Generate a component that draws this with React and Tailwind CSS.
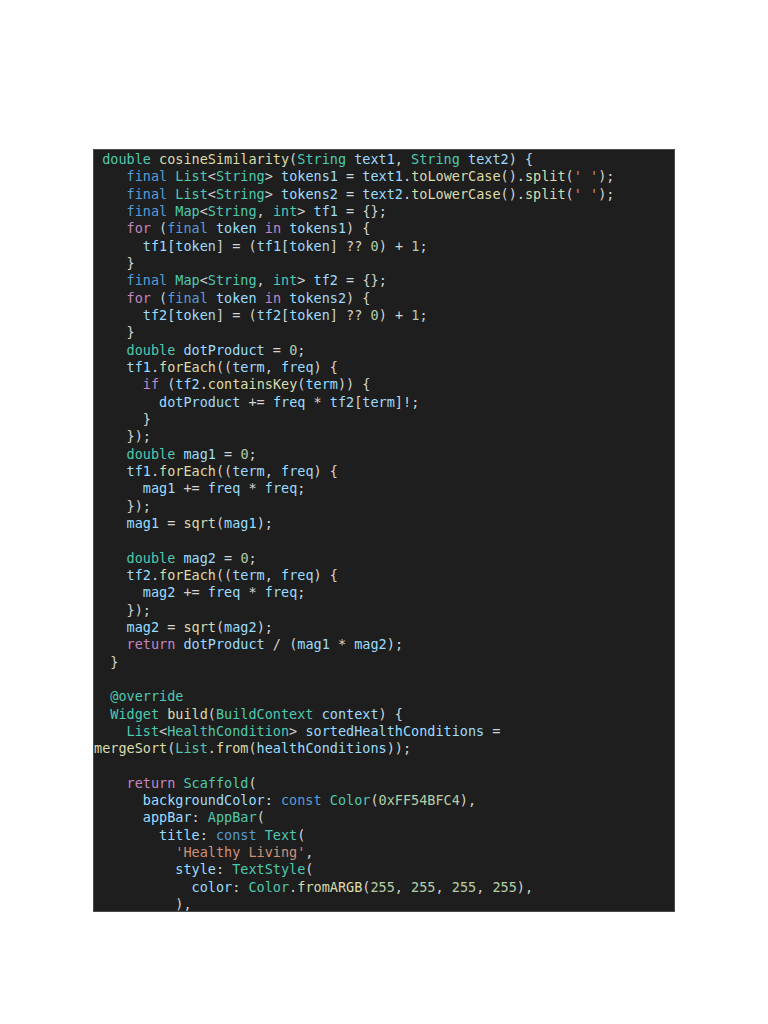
import React from 'react';

const CODE = [
  " double cosineSimilarity(String text1, String text2) {",
  "    final List<String> tokens1 = text1.toLowerCase().split(' ');",
  "    final List<String> tokens2 = text2.toLowerCase().split(' ');",
  "    final Map<String, int> tf1 = {};",
  "    for (final token in tokens1) {",
  "      tf1[token] = (tf1[token] ?? 0) + 1;",
  "    }",
  "    final Map<String, int> tf2 = {};",
  "    for (final token in tokens2) {",
  "      tf2[token] = (tf2[token] ?? 0) + 1;",
  "    }",
  "    double dotProduct = 0;",
  "    tf1.forEach((term, freq) {",
  "      if (tf2.containsKey(term)) {",
  "        dotProduct += freq * tf2[term]!;",
  "      }",
  "    });",
  "    double mag1 = 0;",
  "    tf1.forEach((term, freq) {",
  "      mag1 += freq * freq;",
  "    });",
  "    mag1 = sqrt(mag1);",
  "",
  "    double mag2 = 0;",
  "    tf2.forEach((term, freq) {",
  "      mag2 += freq * freq;",
  "    });",
  "    mag2 = sqrt(mag2);",
  "    return dotProduct / (mag1 * mag2);",
  "  }",
  "",
  "  @override",
  "  Widget build(BuildContext context) {",
  "    List<HealthCondition> sortedHealthConditions =",
  "mergeSort(List.from(healthConditions));",
  "",
  "    return Scaffold(",
  "      backgroundColor: const Color(0xFF54BFC4),",
  "      appBar: AppBar(",
  "        title: const Text(",
  "          'Healthy Living',",
  "          style: TextStyle(",
  "            color: Color.fromARGB(255, 255, 255, 255),",
  "          ),",
];

const colors = {
  keyword: 'text-[#569cd6]',
  control: 'text-[#c586c0]',
  type: 'text-[#4ec9b0]',
  fn: 'text-[#dcdcaa]',
  variable: 'text-[#9cdcfe]',
  string: 'text-[#ce9178]',
  number: 'text-[#b5cea8]',
  plain: 'text-[#d4d4d4]',
};

const keywords = new Set(['final', 'const']);
const control = new Set(['for', 'in', 'if', 'return']);
const types = new Set([
  'double', 'List', 'String', 'Map', 'int', 'Widget', 'BuildContext',
  'HealthCondition', 'Scaffold', 'Color', 'AppBar', 'Text', 'TextStyle', '@override',
]);

// rough dart highlighter, good enough for this snippet
function tokenize(line) {
  const re = /('[^']*')|(@?[A-Za-z_][A-Za-z0-9_]*)|(0x[0-9A-Fa-f]+|\d+)|(\s+)|(.)/g;
  const out = [];
  let m;
  while ((m = re.exec(line)) !== null) {
    const [text, str, ident, num] = m;
    let kind = 'plain';
    if (str) kind = 'string';
    else if (num) kind = 'number';
    else if (ident) {
      if (keywords.has(ident)) kind = 'keyword';
      else if (control.has(ident)) kind = 'control';
      else if (types.has(ident)) kind = 'type';
      else if (line[re.lastIndex] === '(') kind = 'fn';
      else kind = 'variable';
    }
    out.push({ text, kind });
  }
  return out;
}

const CodeLine = ({ line }) => (
  <div className="h-[17.33px]">
    {tokenize(line).map((t, i) => (
      <span key={i} className={colors[t.kind]}>{t.text}</span>
    ))}
  </div>
);

export default function App() {
  return (
    <div className="min-h-screen w-full bg-white pt-[149px] pl-[93px]">
      <div
        className="w-[582px] h-[763px] overflow-hidden bg-[#1e1e1e] border border-[#4a4a4a] pt-px whitespace-pre text-[13.5px] leading-[17.33px]"
        style={{ fontFamily: '"DejaVu Sans Mono", monospace' }}
      >
        {CODE.map((line, i) => (
          <CodeLine key={i} line={line} />
        ))}
      </div>
    </div>
  );
}
